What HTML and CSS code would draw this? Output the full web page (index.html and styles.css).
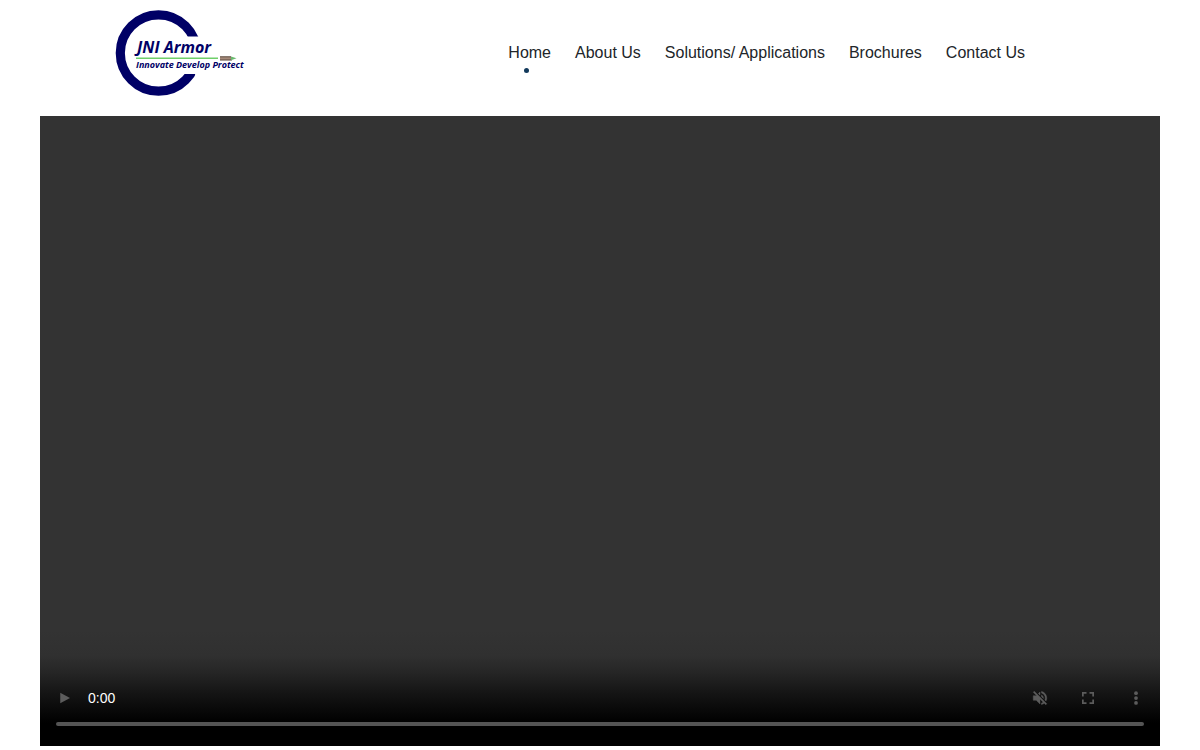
FILE: index.html
```html
<!DOCTYPE html>
<html lang="en">
<head>
<meta charset="utf-8">
<meta name="viewport" content="width=device-width, initial-scale=1">
<title>JNI Armor</title>
<link rel="stylesheet" href="styles.css">
</head>
<body>
<header class="header">
  <a class="logo" href="#" aria-label="JNI Armor home">
    <svg class="logo-image" width="140" height="90" viewBox="0 0 140 90" role="img" aria-label="JNI Armor">
      <circle cx="50.500" cy="45" r="38.200" fill="none" stroke="#000066" stroke-width="9.200"/>
      <path d="M70 28.500H100V66H88L87 68V66H70Z" fill="#fff"/>
      <path d="M28 50.200H110" stroke="#6fcf6a" stroke-width="1.600"/>
      <rect x="112" y="48.600" width="11" height="3.600" fill="#a58a7a"/>
      <path d="M112 48.800H123M112 52H124" stroke="#55443a" stroke-width="0.900"/>
      <path d="M123 48.600L128.500 50.300L123 52.200Z" fill="#69ba6e"/>
      <text class="logo-name" x="29" y="45">JNI Armor</text>
      <text class="logo-tagline" x="28" y="60">Innovate Develop Protect</text>
    </svg>
  </a>
  <nav class="nav" aria-label="Main">
    <a class="nav-link active" href="#">Home</a>
    <a class="nav-link" href="#">About Us</a>
    <a class="nav-link" href="#">Solutions/ Applications</a>
    <a class="nav-link" href="#">Brochures</a>
    <a class="nav-link" href="#">Contact Us</a>
  </nav>
</header>
<main class="content">
  <section class="player" aria-label="Video player">
    <div class="controls">
      <div class="control-row">
        <button class="control" type="button" aria-label="Play">
          <svg width="18" height="18" viewBox="0 0 24 24"><path d="M7 5v14l13-7z"/></svg>
        </button>
        <span class="time">0:00</span>
        <button class="control" type="button" aria-label="Unmute">
          <svg width="18" height="18" viewBox="0 0 24 24"><path d="M16.500 12c0-1.770-1.020-3.290-2.500-4.030v2.210l2.450 2.450c.03-.2.050-.41.050-.63zm2.500 0c0 .94-.2 1.820-.54 2.640l1.510 1.510C20.630 14.910 21 13.500 21 12c0-4.280-2.990-7.860-7-8.770v2.060c2.890.86 5 3.540 5 6.710zM4.270 3L3 4.270 7.730 9H3v6h4l5 5v-6.730l4.250 4.250c-.67.520-1.420.93-2.250 1.180v2.060c1.380-.31 2.630-.95 3.690-1.810L19.730 21 21 19.730l-9-9L4.270 3zM12 4L9.910 6.090 12 8.180V4z" stroke="#5c5c5c" stroke-width="0.600"/></svg>
        </button>
        <button class="control" type="button" aria-label="Full screen">
          <svg width="18" height="18" viewBox="0 0 24 24"><path d="M6.300 14H4v6h6v-2.300H6.300zM4 10h2.300V6.300H10V4H4zm13.700 7.700H14V20h6v-6h-2.300zM14 4v2.300h3.700V10H20V4z" transform="translate(0 0)"/></svg>
        </button>
        <button class="control" type="button" aria-label="More options">
          <svg width="18" height="18" viewBox="0 0 24 24"><circle cx="12" cy="5.500" r="2.500"/><circle cx="12" cy="12" r="2.500"/><circle cx="12" cy="18.500" r="2.500"/></svg>
        </button>
      </div>
      <input class="timeline" type="range" min="0" max="100" value="0" aria-label="Seek" disabled>
    </div>
  </section>
</main>
</body>
</html>
```
FILE: styles.css
```css
* {
  box-sizing: border-box;
}

body {
  margin: 0;
  background: #fff;
  color: #212529;
  font-family: "Liberation Sans", Arial, sans-serif;
  font-size: 16px;
  line-height: 24px;
}

.header {
  display: flex;
  align-items: center;
  justify-content: space-between;
  max-width: 1140px;
  margin: 0 auto;
  padding: 8px 145px 18px 78px;
}

.logo,
.logo-image {
  display: block;
}

.logo-name,
.logo-tagline {
  fill: #000066;
  font-family: "Open Sans", "Noto Sans", sans-serif;
  font-style: italic;
  font-weight: 700;
}

.logo-name {
  font-size: 16px;
}

.logo-tagline {
  font-size: 9px;
}

.nav {
  display: flex;
  gap: 24px;
}

.nav-link {
  position: relative;
  color: #212529;
  text-decoration: none;
  white-space: nowrap;
}

.active::after {
  content: "";
  position: absolute;
  top: 27px;
  left: 16px;
  width: 5px;
  height: 5px;
  border-radius: 50%;
  background: #12395b;
}

.content {
  max-width: 1200px;
  margin: 0 auto;
  padding: 0 40px;
}

.player {
  display: flex;
  flex-direction: column;
  justify-content: flex-end;
  aspect-ratio: 16 / 9;
  background: #333;
}

.controls {
  padding-top: 44px;
  background: linear-gradient(to bottom, #333 0%, #303030 22%, #262626 36%, #151515 54%, #080808 70%, #000 80%);
}

.control-row {
  display: flex;
  align-items: center;
}

.control {
  display: flex;
  align-items: center;
  justify-content: center;
  width: 48px;
  height: 48px;
  padding: 0;
  border: 0;
  background: none;
  fill: #5c5c5c;
}

.time {
  flex: 1;
  color: #fff;
  font-size: 14px;
}

.timeline {
  display: block;
  appearance: none;
  width: calc(100% - 32px);
  height: 4px;
  margin: 0 16px 20px;
  border-radius: 2px;
  background: #545454;
}

.timeline::-webkit-slider-thumb {
  appearance: none;
  width: 0;
  height: 0;
}
```
